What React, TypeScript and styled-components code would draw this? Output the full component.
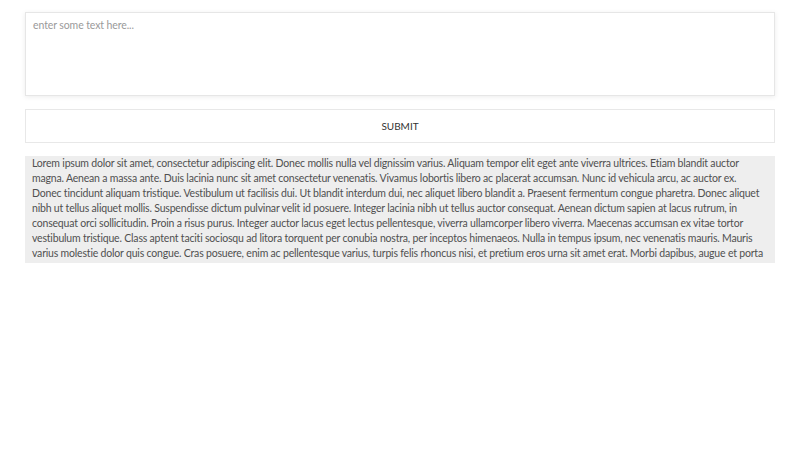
import React from "react";
import styled, { createGlobalStyle } from "styled-components";

const Global = createGlobalStyle`
  html, body { margin: 0; padding: 0; background: #fff; }
  body { font-family: Lato, "Open Sans", sans-serif; }
  * { box-sizing: border-box; }
`;

const Page = styled.div`
  display: flex;
  flex-direction: column;
  gap: 13px;
  padding: 12px 25px;
`;

const TextArea = styled.textarea`
  display: block;
  width: 100%;
  height: 84px;
  resize: none;
  border: 1px solid #e6e6e6;
  box-shadow: 0 1px 5px rgba(0, 0, 0, 0.08);
  padding: 6px 7px;
  font-family: Lato, "Open Sans", sans-serif;
  font-size: 10.5px;
  letter-spacing: -0.1px;
  color: #333;
  outline: none;
  &::placeholder { color: #9a9a9a; }
`;

const Button = styled.button`
  height: 34px;
  width: 100%;
  background: #fff;
  border: 1px solid #e8e8e8;
  font-family: Lato, "Open Sans", sans-serif;
  font-size: 10px;
  color: #333;
  text-transform: uppercase;
  cursor: pointer;
`;

const Output = styled.div`
  height: 107px;
  overflow: hidden;
  background: #eeeeee;
  padding: 0 7px;
  font-size: 10.5px;
  letter-spacing: -0.19px;
  line-height: 15px;
  color: #505050;
`;

const LOREM =
  "Lorem ipsum dolor sit amet, consectetur adipiscing elit. Donec mollis nulla vel dignissim varius. Aliquam tempor elit eget ante viverra ultrices. Etiam blandit auctor magna. Aenean a massa ante. Duis lacinia nunc sit amet consectetur venenatis. Vivamus lobortis libero ac placerat accumsan. Nunc id vehicula arcu, ac auctor ex. Donec tincidunt aliquam tristique. Vestibulum ut facilisis dui. Ut blandit interdum dui, nec aliquet libero blandit a. Praesent fermentum congue pharetra. Donec aliquet nibh ut tellus aliquet mollis. Suspendisse dictum pulvinar velit id posuere. Integer lacinia nibh ut tellus auctor consequat. Aenean dictum sapien at lacus rutrum, in consequat orci sollicitudin. Proin a risus purus. Integer auctor lacus eget lectus pellentesque, viverra ullamcorper libero viverra. Maecenas accumsan ex vitae tortor vestibulum tristique. Class aptent taciti sociosqu ad litora torquent per conubia nostra, per inceptos himenaeos. Nulla in tempus ipsum, nec venenatis mauris. Mauris varius molestie dolor quis congue. Cras posuere, enim ac pellentesque varius, turpis felis rhoncus nisi, et pretium eros urna sit amet erat. Morbi dapibus, augue et porta tincidunt, sapien velit fermentum nibh, in vehicula ante lacus a sapien. Fusce ac ultrices tortor.";

export default function App() {
  return (
    <>
      <Global />
      <Page>
        <TextArea placeholder="enter some text here..." />
        <Button>Submit</Button>
        <Output>{LOREM}</Output>
      </Page>
    </>
  );
}
